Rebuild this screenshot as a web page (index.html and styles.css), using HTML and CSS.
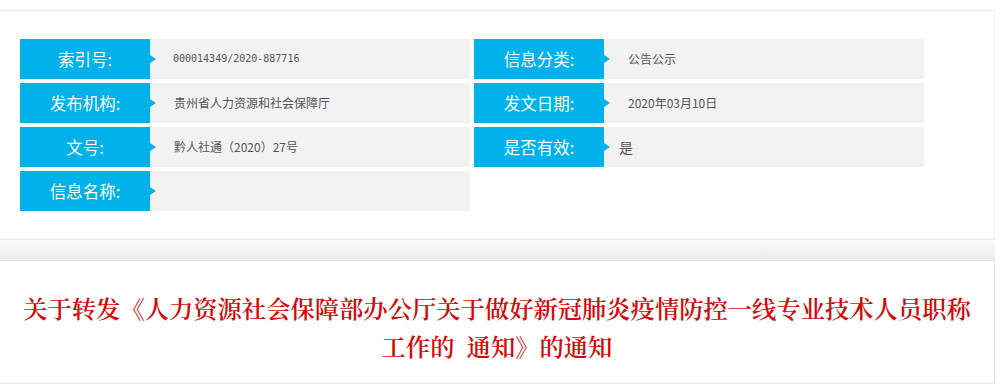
FILE: index.html
```html
<!DOCTYPE html>
<html lang="zh-CN">
<head>
  <meta charset="UTF-8" />
  <meta name="viewport" content="width=device-width, initial-scale=1.0"/>
  <title>关于转发的通知</title>
  <link rel="stylesheet" href="styles.css">
</head>
<body>
  <section class="info-panel">
    <div class="info-grid">
      <div class="info-row">
        <div class="label">索引号:</div>
        <div class="value mono">000014349/2020-887716</div>
      </div>
      <div class="info-row">
        <div class="label">信息分类:</div>
        <div class="value">公告公示</div>
      </div>
      <div class="info-row">
        <div class="label">发布机构:</div>
        <div class="value">贵州省人力资源和社会保障厅</div>
      </div>
      <div class="info-row">
        <div class="label">发文日期:</div>
        <div class="value">2020年03月10日</div>
      </div>
      <div class="info-row">
        <div class="label">文号:</div>
        <div class="value">黔人社通（2020）27号</div>
      </div>
      <div class="info-row">
        <div class="label">是否有效:</div>
        <div class="value tight">是</div>
      </div>
      <div class="info-row">
        <div class="label">信息名称:</div>
        <div class="value"></div>
      </div>
    </div>
  </section>

  <div class="divider"></div>

  <section class="title-panel">
    <h1>
      <span class="line">关于转发《人力资源社会保障部办公厅关于做好新冠肺炎疫情防控一线专业技术人员职称</span>
      <span class="line">工作的&ensp;通知》的通知</span>
    </h1>
  </section>
</body>
</html>
```

FILE: styles.css
```css
* { box-sizing: border-box; margin: 0; padding: 0; }
body {
  background-color: #fff;
  color: #555;
  font-family: "Noto Sans CJK SC", sans-serif;
  overflow: hidden;
}
.info-panel {
  border-top: 1px solid #e8e8e8;
  border-bottom: 1px solid #e8e8e8;
  border-right: 1px solid #f0f0f0;
  margin-top: 10px;
  padding: 28px 20px 28px;
  width: 995px;
}
.info-grid {
  display: grid;
  grid-template-columns: 450px 450px;
  grid-auto-rows: 40px;
  gap: 4px;
}
.info-row {
  display: flex;
}
.label {
  background-color: #01b1ea;
  color: #fff;
  flex: 0 0 130px;
  font-size: 16.5px;
  line-height: 40px;
  position: relative;
  text-align: center;
}
.label::after {
  border-bottom: 4px solid transparent;
  border-left: 6px solid #01b1ea;
  border-top: 4px solid transparent;
  content: "";
  position: absolute;
  right: -6px;
  top: 16px;
}
.value {
  background-color: #f2f2f2;
  flex: 1;
  font-size: 12px;
  line-height: 40px;
  padding-left: 24px;
}
.value.mono {
  font-family: "DejaVu Sans Mono", monospace;
  font-size: 10px;
  padding-left: 23px;
}
.value.tight {
  font-size: 14px;
  padding-left: 15px;
}
.divider {
  background: linear-gradient(#fafafa, #ececec);
  height: 20px;
  width: 995px;
}
.title-panel {
  border-top: 1px solid #e2e2e2;
  border-bottom: 1px solid #e8e8e8;
  border-right: 1px solid #e8e8e8;
  padding: 28px 0 18px;
  width: 995px;
}
.title-panel h1 {
  color: #d20a0a;
  font-family: "Noto Serif CJK SC", serif;
  font-size: 24.3px;
  font-weight: 600;
  line-height: 38px;
  text-align: center;
}
.title-panel .line {
  display: block;
  white-space: nowrap;
}
```
